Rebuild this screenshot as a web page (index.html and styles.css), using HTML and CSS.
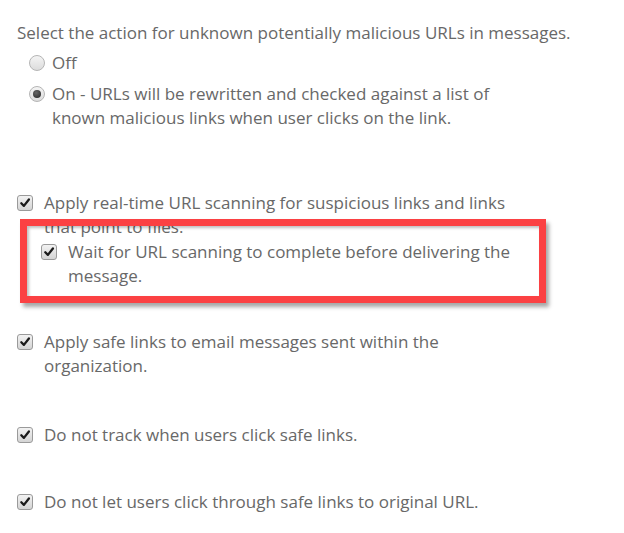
FILE: index.html
```html
<!DOCTYPE html>
<html lang="en">
    <head>
        <meta charset="UTF-8" />
        <title>Safe links</title>
        <link rel="stylesheet" href="styles.css">
    </head>
    <body>

        <div class="settings">
            <p class="intro">Select the action for unknown potentially malicious URLs in messages.</p>

            <div class="radio-list">
                <label class="option">
                    <span class="radio"></span>
                    <span class="label-text">Off</span>
                </label>
                <label class="option option-on">
                    <span class="radio checked"></span>
                    <span class="label-text">On - URLs will be rewritten and checked against a list of<br>known malicious links when user clicks on the link.</span>
                </label>
            </div>

            <div class="check-group">
                <label class="option">
                    <span class="checkbox"><svg viewBox="0 0 14 14"><path d="M3.3 7.3 L5.9 9.9 L10.9 3.5" /></svg></span>
                    <span class="label-text">Apply real-time URL scanning for suspicious links and links<br>that point to files.</span>
                </label>
                <div class="nested">
                    <label class="option">
                        <span class="checkbox"><svg viewBox="0 0 14 14"><path d="M3.3 7.3 L5.9 9.9 L10.9 3.5" /></svg></span>
                        <span class="label-text">Wait for URL scanning to complete before delivering the<br>message.</span>
                    </label>
                    <div class="highlight"></div>
                </div>
            </div>

            <label class="option single safe-links">
                <span class="checkbox"><svg viewBox="0 0 14 14"><path d="M3.3 7.3 L5.9 9.9 L10.9 3.5" /></svg></span>
                <span class="label-text">Apply safe links to email messages sent within the<br>organization.</span>
            </label>

            <label class="option single no-track">
                <span class="checkbox"><svg viewBox="0 0 14 14"><path d="M3.3 7.3 L5.9 9.9 L10.9 3.5" /></svg></span>
                <span class="label-text">Do not track when users click safe links.</span>
            </label>

            <label class="option single no-click">
                <span class="checkbox"><svg viewBox="0 0 14 14"><path d="M3.3 7.3 L5.9 9.9 L10.9 3.5" /></svg></span>
                <span class="label-text">Do not let users click through safe links to original URL.</span>
            </label>
        </div>

    </body>
</html>
```

FILE: styles.css
```css
body {
    margin: 0;
    background-color: #FFFFFF;
    font-family: 'Open Sans', 'Noto Sans', sans-serif;
    font-size: 17px;
    line-height: 24px;
    color: #686868;
}

.settings {
    position: relative;
    padding: 21px 0 0 17px;
}

.intro {
    margin: 0;
}

.radio-list {
    margin-top: 6px;
    padding-left: 12px;
    display: flex;
    flex-direction: column;
    gap: 7px;
}

.option {
    display: flex;
    align-items: flex-start;
}

.radio {
    flex: none;
    width: 14px;
    height: 14px;
    margin: 4px 7px 0 0;
    border: 1px solid #B5B5B5;
    border-radius: 50%;
    background: linear-gradient(#F4F4F4, #DCDCDC);
    display: flex;
    align-items: center;
    justify-content: center;
}

.radio.checked::after {
    content: "";
    width: 8px;
    height: 8px;
    border-radius: 50%;
    background: radial-gradient(circle at 40% 35%, #666666, #222222);
}

.checkbox {
    flex: none;
    width: 14px;
    height: 14px;
    margin: 4px 11px 0 0;
    border: 1px solid #9A9A9A;
    border-radius: 3px;
    background: linear-gradient(#F2F2F2, #D4D4D4);
    display: flex;
}

.checkbox svg {
    width: 14px;
    height: 14px;
}

.checkbox path {
    fill: none;
    stroke: #1A1A1A;
    stroke-width: 2.3;
    stroke-linecap: round;
    stroke-linejoin: round;
}

.check-group {
    margin-top: 61px;
}

.nested {
    position: relative;
    margin-top: 1px;
    padding-left: 24px;
}

.highlight {
    position: absolute;
    left: 3px;
    top: -21px;
    width: 512px;
    height: 70px;
    border: 7px solid #FB4143;
    box-shadow: 3px 4px 4px rgba(0, 0, 0, 0.35), inset 2px 2px 3px rgba(0, 0, 0, 0.25);
    pointer-events: none;
}

.safe-links {
    margin-top: 42px;
}

.no-track {
    margin-top: 45px;
}

.no-click {
    margin-top: 43px;
}
```
